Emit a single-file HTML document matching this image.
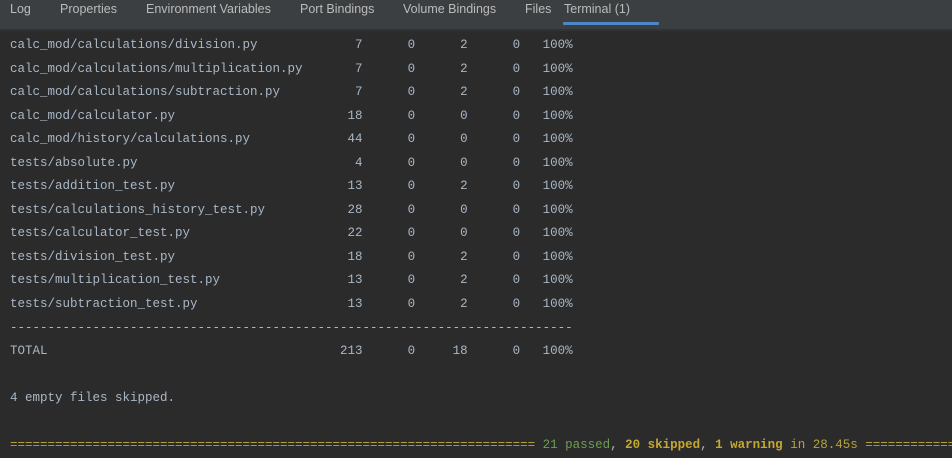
<!DOCTYPE html>
<html><head><style>
body{margin:0;width:952px;height:455px;overflow:hidden;background:#2b2b2b;position:relative;}
.bar{position:absolute;left:0;top:0;width:952px;height:29px;background:#3c3f41;border-bottom:2px solid #323232;font-family:"Liberation Sans",sans-serif;font-size:12.5px;color:#bbbbbb;}
.bar span{position:absolute;top:2px;}
.ul{position:absolute;left:563px;top:22px;width:96px;height:3px;background:#4a88c7;border-radius:1px;}
pre{position:absolute;left:10px;top:34px;width:942px;overflow:hidden;margin:0;font-family:"Liberation Mono",monospace;font-size:12.5px;line-height:23.55px;color:#a9b7c6;white-space:pre;}
.y{color:#b5a33a}.g{color:#6a9f52}.b{color:#c5a82e;font-weight:bold}
</style></head><body>
<div class="bar">
<span style="left:10px">Log</span>
<span style="left:60px">Properties</span>
<span style="left:146px">Environment Variables</span>
<span style="left:300px">Port Bindings</span>
<span style="left:403px">Volume Bindings</span>
<span style="left:525px">Files</span>
<span style="left:564px">Terminal (1)</span>
<div class="ul"></div>
</div>
<pre>calc_mod/calculations/division.py             7      0      2      0   100%
calc_mod/calculations/multiplication.py       7      0      2      0   100%
calc_mod/calculations/subtraction.py          7      0      2      0   100%
calc_mod/calculator.py                       18      0      0      0   100%
calc_mod/history/calculations.py             44      0      0      0   100%
tests/absolute.py                             4      0      0      0   100%
tests/addition_test.py                       13      0      2      0   100%
tests/calculations_history_test.py           28      0      0      0   100%
tests/calculator_test.py                     22      0      0      0   100%
tests/division_test.py                       18      0      2      0   100%
tests/multiplication_test.py                 13      0      2      0   100%
tests/subtraction_test.py                    13      0      2      0   100%
---------------------------------------------------------------------------
TOTAL                                       213      0     18      0   100%

4 empty files skipped.

<span class="y">======================================================================</span> <span class="g">21 passed</span>, <span class="b">20 skipped</span>, <span class="b">1 warning</span><span class="y"> in 28.45s ===========================</span></pre>
</body></html>
